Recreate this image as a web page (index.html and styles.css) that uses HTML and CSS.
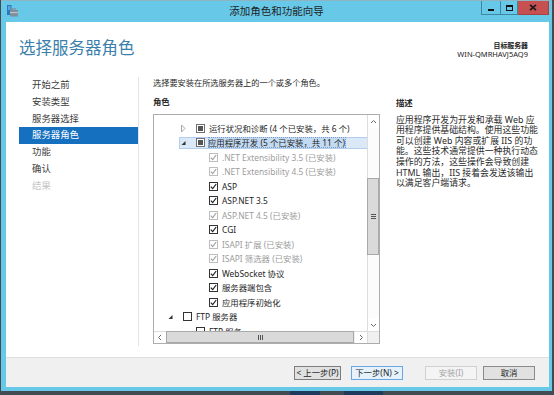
FILE: index.html
```html
<!DOCTYPE html>
<html lang="zh-CN">
<head>
<meta charset="utf-8">
<title>添加角色和功能向导</title>
<link rel="stylesheet" href="styles.css">
</head>
<body>
<div class="window">
  <div class="titlebar">
    <div class="tb-left">
      <svg class="app-icon" width="11" height="12" viewBox="0 0 11 12">
        <rect x="0" y="0" width="4.5" height="10" fill="#2a78bd"/>
        <rect x="1" y="1.5" width="2.5" height="1" fill="#9fd0f0"/>
        <rect x="1" y="3.5" width="2.5" height="1" fill="#9fd0f0"/>
        <rect x="3" y="5" width="8" height="6.5" fill="#7f8f9c"/>
        <rect x="5.5" y="3.8" width="3" height="1.4" fill="none" stroke="#7f8f9c" stroke-width="0.9"/>
        <rect x="3" y="7.2" width="8" height="0.9" fill="#c7d1d8"/>
      </svg>
    </div>
    <div class="tb-title">添加角色和功能向导</div>
    <div class="tb-right">
      <div class="ctl ctl-min"><span class="min-bar"></span></div>
      <div class="ctl ctl-max"><span class="max-box"></span></div>
      <div class="ctl ctl-close">
        <svg width="8" height="7" viewBox="0 0 8 7"><path d="M1 0.8 L7 6.2 M7 0.8 L1 6.2" stroke="#1a1a1a" stroke-width="1.7"/></svg>
      </div>
    </div>
  </div>

  <div class="client">
    <div class="header">
      <div class="page-title">选择服务器角色</div>
      <div class="target">
        <div class="target-label">目标服务器</div>
        <div class="target-name">WIN-QMRHAVJ5AQ9</div>
      </div>
    </div>

    <div class="body">
      <nav class="nav">
        <div class="nav-item">开始之前</div>
        <div class="nav-item">安装类型</div>
        <div class="nav-item">服务器选择</div>
        <div class="nav-item active">服务器角色</div>
        <div class="nav-item">功能</div>
        <div class="nav-item">确认</div>
        <div class="nav-item muted">结果</div>
      </nav>

      <div class="main">
        <div class="intro">选择要安装在所选服务器上的一个或多个角色。</div>
        <div class="label">角色</div>
        <div class="tree">
          <div class="list">
            <div class="row l1"><div class="cell">
              <span class="exp"><svg width="13" height="11" viewBox="0 0 13 11"><path d="M1.5 2 L5 5.5 L1.5 9 Z" fill="none" stroke="#a6a6a6"/></svg></span>
              <span class="cb tri"></span><span class="lbl">运行状况和诊断 (4 个已安装，共 6 个)</span></div></div>
            <div class="row l1 sel"><div class="cell">
              <span class="exp"><svg width="13" height="11" viewBox="0 0 13 11"><path d="M5.5 4 L5.5 8 L1.5 8 Z" fill="#333"/></svg></span>
              <span class="cb tri"></span><span class="lbl hl">应用程序开发 (5 个已安装，共 11 个)</span></div></div>
            <div class="row l2"><div class="cell"><span class="exp"></span>
              <span class="cb chk dis"><svg width="7" height="7" viewBox="0 0 7 7"><path d="M0.8 3.6 L2.7 5.6 L6.2 1" fill="none" stroke="#a2a2a2" stroke-width="1.2"/></svg></span><span class="lbl dis">.NET Extensibility 3.5 (已安装)</span></div></div>
            <div class="row l2"><div class="cell"><span class="exp"></span>
              <span class="cb chk dis"><svg width="7" height="7" viewBox="0 0 7 7"><path d="M0.8 3.6 L2.7 5.6 L6.2 1" fill="none" stroke="#a2a2a2" stroke-width="1.2"/></svg></span><span class="lbl dis">.NET Extensibility 4.5 (已安装)</span></div></div>
            <div class="row l2"><div class="cell"><span class="exp"></span>
              <span class="cb chk"><svg width="7" height="7" viewBox="0 0 7 7"><path d="M0.8 3.6 L2.7 5.6 L6.2 1" fill="none" stroke="#222" stroke-width="1.2"/></svg></span><span class="lbl">ASP</span></div></div>
            <div class="row l2"><div class="cell"><span class="exp"></span>
              <span class="cb chk"><svg width="7" height="7" viewBox="0 0 7 7"><path d="M0.8 3.6 L2.7 5.6 L6.2 1" fill="none" stroke="#222" stroke-width="1.2"/></svg></span><span class="lbl">ASP.NET 3.5</span></div></div>
            <div class="row l2"><div class="cell"><span class="exp"></span>
              <span class="cb chk dis"><svg width="7" height="7" viewBox="0 0 7 7"><path d="M0.8 3.6 L2.7 5.6 L6.2 1" fill="none" stroke="#a2a2a2" stroke-width="1.2"/></svg></span><span class="lbl dis">ASP.NET 4.5 (已安装)</span></div></div>
            <div class="row l2"><div class="cell"><span class="exp"></span>
              <span class="cb chk"><svg width="7" height="7" viewBox="0 0 7 7"><path d="M0.8 3.6 L2.7 5.6 L6.2 1" fill="none" stroke="#222" stroke-width="1.2"/></svg></span><span class="lbl">CGI</span></div></div>
            <div class="row l2"><div class="cell"><span class="exp"></span>
              <span class="cb chk dis"><svg width="7" height="7" viewBox="0 0 7 7"><path d="M0.8 3.6 L2.7 5.6 L6.2 1" fill="none" stroke="#a2a2a2" stroke-width="1.2"/></svg></span><span class="lbl dis">ISAPI 扩展 (已安装)</span></div></div>
            <div class="row l2"><div class="cell"><span class="exp"></span>
              <span class="cb chk dis"><svg width="7" height="7" viewBox="0 0 7 7"><path d="M0.8 3.6 L2.7 5.6 L6.2 1" fill="none" stroke="#a2a2a2" stroke-width="1.2"/></svg></span><span class="lbl dis">ISAPI 筛选器 (已安装)</span></div></div>
            <div class="row l2"><div class="cell"><span class="exp"></span>
              <span class="cb chk"><svg width="7" height="7" viewBox="0 0 7 7"><path d="M0.8 3.6 L2.7 5.6 L6.2 1" fill="none" stroke="#222" stroke-width="1.2"/></svg></span><span class="lbl">WebSocket 协议</span></div></div>
            <div class="row l2"><div class="cell"><span class="exp"></span>
              <span class="cb chk"><svg width="7" height="7" viewBox="0 0 7 7"><path d="M0.8 3.6 L2.7 5.6 L6.2 1" fill="none" stroke="#222" stroke-width="1.2"/></svg></span><span class="lbl">服务器端包含</span></div></div>
            <div class="row l2"><div class="cell"><span class="exp"></span>
              <span class="cb chk"><svg width="7" height="7" viewBox="0 0 7 7"><path d="M0.8 3.6 L2.7 5.6 L6.2 1" fill="none" stroke="#222" stroke-width="1.2"/></svg></span><span class="lbl">应用程序初始化</span></div></div>
            <div class="row l0"><div class="cell">
              <span class="exp"><svg width="13" height="11" viewBox="0 0 13 11"><path d="M5.5 4 L5.5 8 L1.5 8 Z" fill="#333"/></svg></span>
              <span class="cb"></span><span class="lbl">FTP 服务器</span></div></div>
            <div class="row l1"><div class="cell"><span class="exp"></span>
              <span class="cb"></span><span class="lbl">FTP 服务</span></div></div>
          </div>

          <div class="vscroll">
            <div class="sb-btn"><svg width="11" height="12" viewBox="0 0 11 12"><path d="M3 7 L5.5 4.5 L8 7" fill="none" stroke="#6a6a6a"/></svg></div>
            <div class="v-before"></div>
            <div class="v-thumb"><svg width="5" height="5" viewBox="0 0 5 5"><path d="M0 0.5 H5 M0 2.5 H5 M0 4.5 H5" stroke="#555"/></svg></div>
            <div class="v-after"></div>
            <div class="sb-btn"><svg width="11" height="12" viewBox="0 0 11 12"><path d="M3 5 L5.5 7.5 L8 5" fill="none" stroke="#6a6a6a"/></svg></div>
          </div>

          <div class="hscroll">
            <div class="sb-btn h"><svg width="12" height="11" viewBox="0 0 12 11"><path d="M7 3 L4.5 5.5 L7 8" fill="none" stroke="#6a6a6a"/></svg></div>
            <div class="h-thumb"><svg width="5" height="5" viewBox="0 0 5 5"><path d="M0.5 0 V5 M2.5 0 V5 M4.5 0 V5" stroke="#555"/></svg></div>
            <div class="sb-btn h"><svg width="12" height="11" viewBox="0 0 12 11"><path d="M5 3 L7.5 5.5 L5 8" fill="none" stroke="#6a6a6a"/></svg></div>
          </div>
          <div class="corner"></div>
        </div>
      </div>

      <div class="desc">
        <div class="desc-title">描述</div>
        <div class="desc-text">
          <div class="dl">应用程序开发为开发和承载 Web 应</div>
          <div class="dl">用程序提供基础结构。使用这些功能</div>
          <div class="dl">可以创建 Web 内容或扩展 IIS 的功</div>
          <div class="dl">能。这些技术通常提供一种执行动态</div>
          <div class="dl">操作的方法，这些操作会导致创建</div>
          <div class="dl">HTML 输出，IIS 接着会发送该输出</div>
          <div class="dl">以满足客户端请求。</div>
        </div>
      </div>
    </div>

    <div class="footer">
      <button class="btn btn-back">&lt; 上一步(P)</button>
      <button class="btn btn-next">下一步(N) &gt;</button>
      <button class="btn btn-install">安装(I)</button>
      <button class="btn btn-cancel">取消</button>
    </div>
  </div>
</div>
<div class="taskbar"><span class="task t1"></span><span class="task t2"></span></div>
</body>
</html>
```

FILE: styles.css
```css
* { box-sizing: border-box; }
html, body { margin: 0; padding: 0; }
body {
  width: 554px;
  height: 395px;
  overflow: hidden;
  background: #434b52;
  font-family: "Noto Sans", "Noto Sans CJK SC", sans-serif;
  color: #222;
  display: flex;
  flex-direction: column;
}

.window {
  width: 551px;
  height: 391px;
  margin-left: 1px;
  background: #68c8e8;
  border-top: 1px solid #8fb3c0;
  display: flex;
  flex-direction: column;
  flex: none;
}

/* title bar */
.titlebar {
  height: 21px;
  flex: none;
  display: grid;
  grid-template-columns: 1fr auto 1fr;
}
.tb-left { padding: 4px 0 0 6px; }
.app-icon { display: block; }
.tb-title {
  font-size: 10.5px;
  line-height: 21px;
  color: #1e1e1e;
}
.tb-right {
  display: flex;
  justify-content: flex-end;
  align-items: flex-start;
  padding-right: 3px;
}
.ctl {
  height: 14px;
  border: 1px solid #3d87a3;
  border-top: none;
  display: flex;
  align-items: center;
  justify-content: center;
}
.ctl-min { width: 20px; }
.ctl-max { width: 17px; border-left: none; }
.ctl-close { width: 31px; border-left: none; background: #c75050; border-color: #a64242; }
.min-bar { width: 6px; height: 2px; background: #111; margin-top: 5px; }
.max-box { width: 7px; height: 6px; border: 1px solid #111; border-top-width: 2px; }

/* client */
.client {
  flex: 1;
  margin: 0 3px 4px 5px;
  background: #fff;
  display: flex;
  flex-direction: column;
}

.header {
  height: 50px;
  flex: none;
  display: flex;
  justify-content: space-between;
  align-items: flex-start;
  padding: 16px 21px 0 13px;
}
.page-title {
  font-size: 16.5px;
  line-height: 20px;
  color: #3b80ab;
}
.target { margin-top: 2.5px; text-align: right; font-size: 7.5px; line-height: 9px; color: #222; }
.target-label { font-weight: bold; font-size: 6.9px; }

.body { flex: 1; display: flex; }

.nav {
  width: 133px;
  flex: none;
  align-self: flex-start;
  margin-top: 5px;
  height: 269px;
  border-right: 1px solid #e3e3e3;
  padding-left: 13px;
}
.nav-item {
  height: 16.8px;
  line-height: 16.8px;
  padding-left: 13px;
  font-size: 9.4px;
  color: #3c3c3c;
}
.nav-item.active { background: #1570bf; color: #fff; }
.nav-item.muted { color: #c4c4c4; }

.main {
  width: 227px;
  flex: none;
  margin-left: 14px;
  display: flex;
  flex-direction: column;
}
.intro { margin-top: 5px; font-size: 8.2px; line-height: 12px; color: #2a2a2a; white-space: nowrap; }
.label { margin-top: 7px; font-size: 8.4px; line-height: 12px; font-weight: bold; color: #2a2a2a; }

.tree {
  margin-top: 6px;
  height: 230px;
  border: 1px solid #adadad;
  display: grid;
  grid-template-columns: 1fr 12px;
  grid-template-rows: 1fr 12px;
  background: #fff;
}
.list { overflow: hidden; padding-top: 6px; }
.row {
  height: 14.5px;
  display: flex;
  align-items: center;
  font-size: 8.4px;
  white-space: nowrap;
}
.row.l0 { padding-left: 12px; }
.row.l1 { padding-left: 25px; }
.row.l2 { padding-left: 38px; }
.cell {
  flex: 1;
  height: 11.5px;
  display: flex;
  align-items: center;
  border: 1px solid transparent;
  border-right: none;
}
.row.sel .cell { background: #dbe8f7; border-color: #b3cdec; }
.exp { width: 13px; height: 11px; flex: none; display: block; }
.exp svg { display: block; }
.cb {
  width: 9px;
  height: 9px;
  flex: none;
  margin-left: 3px;
  margin-right: 4px;
  border: 1px solid #333;
  background: #fff;
  display: flex;
  align-items: center;
  justify-content: center;
}
.cb svg { display: block; }
.cb.tri { border-color: #707070; }
.cb.tri::after { content: ""; width: 5px; height: 5px; background: #555; }
.cb.dis { border-color: #bdbdbd; }
.lbl { line-height: 11px; color: #1e1e1e; }
.lbl.dis { color: #9c9c9c; }
.lbl.hl { background: #c3daf3; outline: 1px dotted #7a9cc4; outline-offset: -1px; padding: 0 1px 0 0; margin-left: -1px; }

.vscroll {
  display: flex;
  flex-direction: column;
  border-left: 1px solid #dcdcdc;
  background: #fcfcfc;
}
.sb-btn { height: 13px; flex: none; display: flex; align-items: center; justify-content: center; background: #fff; }
.sb-btn.h { width: 12px; height: auto; }
.v-before { height: 50px; flex: none; }
.v-thumb {
  height: 77px;
  flex: none;
  background: #dadada;
  border: 1px solid #a9a9a9;
  margin-left: -1px;
  display: flex;
  align-items: center;
  justify-content: center;
}
.v-after { flex: 1; }

.hscroll {
  display: flex;
  border-top: 1px solid #dcdcdc;
  background: #f0f0f0;
}
.h-thumb {
  flex: 1;
  margin: 0 1px 0 0;
  background: #dadada;
  border: 1px solid #a9a9a9;
  margin-top: -1px;
  display: flex;
  align-items: center;
  justify-content: center;
}
.corner { background: #f0f0f0; border-top: 1px solid #dcdcdc; border-left: 1px solid #dcdcdc; }

.desc { margin-left: 16px; padding-top: 25px; }
.desc-title { font-size: 8.4px; line-height: 12px; font-weight: bold; color: #2a2a2a; }
.desc-text { margin-top: 5.7px; font-size: 8.9px; color: #2a2a2a; white-space: nowrap; }
.dl { height: 10.6px; line-height: 10.6px; }

.footer {
  height: 30px;
  flex: none;
  background: #f0f0f0;
  border-top: 1px solid #dfdfdf;
  display: flex;
  justify-content: flex-end;
  align-items: flex-start;
  padding: 8px 14px 0 0;
}
.btn {
  height: 14px;
  padding: 0;
  border: 1px solid #8a8a8a;
  background: #e1e1e1;
  font-family: inherit;
  font-size: 8.4px;
  line-height: 12px;
  color: #1e1e1e;
  text-align: center;
}
.btn-back { width: 47px; border-color: #7d7d7d; }
.btn-next { width: 52px; margin-left: 10px; border-color: #6aa7e0; background: #e5f1fb; }
.btn-install { width: 52px; margin-left: 22px; border-color: #d0d0d0; background: #f4f4f4; color: #a5a5a5; }
.btn-cancel { width: 52px; margin-left: 6px; border-color: #8a8a8a; }

.taskbar { height: 4px; flex: none; display: flex; }
.task { display: block; height: 4px; background: #1e3b5d; }
.t1 { margin-left: 290px; width: 30px; }
.t2 { margin-left: 24px; width: 39px; }
```
